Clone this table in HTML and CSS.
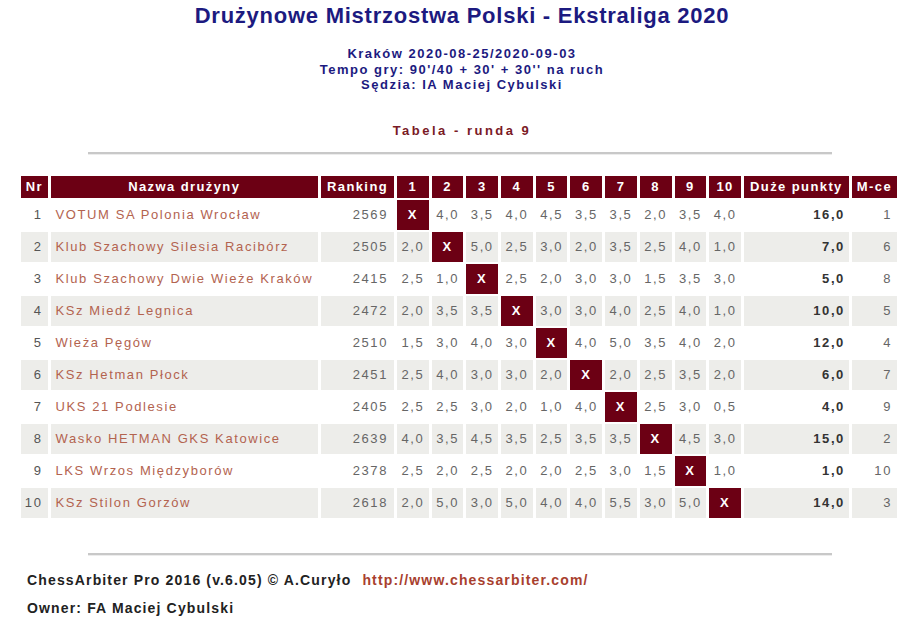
FILE: index.html
```html
<!DOCTYPE html>
<html lang="pl">
<head>
<meta charset="utf-8">
<title>Drużynowe Mistrzostwa Polski - Ekstraliga 2020</title>
<link rel="stylesheet" href="styles.css">
</head>
<body>
<h1 class="title">Drużynowe Mistrzostwa Polski - Ekstraliga 2020</h1>
<div class="info">
  <div>Kraków 2020-08-25/2020-09-03</div>
  <div>Tempo gry: 90'/40 + 30' + 30'' na ruch</div>
  <div>Sędzia: IA Maciej Cybulski</div>
</div>
<div class="round">Tabela - runda 9</div>
<hr class="rule">
<table class="standings">
  <colgroup>
    <col class="c-nr"><col class="c-name"><col class="c-rank">
    <col class="c-g"><col class="c-g"><col class="c-g"><col class="c-g"><col class="c-g">
    <col class="c-g"><col class="c-g"><col class="c-g"><col class="c-g"><col class="c-g">
    <col class="c-pts"><col class="c-pl">
  </colgroup>
  <thead>
    <tr><th>Nr</th><th>Nazwa drużyny</th><th>Ranking</th><th>1</th><th>2</th><th>3</th><th>4</th><th>5</th><th>6</th><th>7</th><th>8</th><th>9</th><th>10</th><th>Duże punkty</th><th>M-ce</th></tr>
  </thead>
  <tbody>
    <tr><td class="nr">1</td><td class="name">VOTUM SA Polonia Wrocław</td><td class="rank">2569</td><td class="x">X</td><td>4,0</td><td>3,5</td><td>4,0</td><td>4,5</td><td>3,5</td><td>3,5</td><td>2,0</td><td>3,5</td><td>4,0</td><td class="pts">16,0</td><td class="pl">1</td></tr>
    <tr class="alt"><td class="nr">2</td><td class="name">Klub Szachowy Silesia Racibórz</td><td class="rank">2505</td><td>2,0</td><td class="x">X</td><td>5,0</td><td>2,5</td><td>3,0</td><td>2,0</td><td>3,5</td><td>2,5</td><td>4,0</td><td>1,0</td><td class="pts">7,0</td><td class="pl">6</td></tr>
    <tr><td class="nr">3</td><td class="name">Klub Szachowy Dwie Wieże Kraków</td><td class="rank">2415</td><td>2,5</td><td>1,0</td><td class="x">X</td><td>2,5</td><td>2,0</td><td>3,0</td><td>3,0</td><td>1,5</td><td>3,5</td><td>3,0</td><td class="pts">5,0</td><td class="pl">8</td></tr>
    <tr class="alt"><td class="nr">4</td><td class="name">KSz Miedź Legnica</td><td class="rank">2472</td><td>2,0</td><td>3,5</td><td>3,5</td><td class="x">X</td><td>3,0</td><td>3,0</td><td>4,0</td><td>2,5</td><td>4,0</td><td>1,0</td><td class="pts">10,0</td><td class="pl">5</td></tr>
    <tr><td class="nr">5</td><td class="name">Wieża Pęgów</td><td class="rank">2510</td><td>1,5</td><td>3,0</td><td>4,0</td><td>3,0</td><td class="x">X</td><td>4,0</td><td>5,0</td><td>3,5</td><td>4,0</td><td>2,0</td><td class="pts">12,0</td><td class="pl">4</td></tr>
    <tr class="alt"><td class="nr">6</td><td class="name">KSz Hetman Płock</td><td class="rank">2451</td><td>2,5</td><td>4,0</td><td>3,0</td><td>3,0</td><td>2,0</td><td class="x">X</td><td>2,0</td><td>2,5</td><td>3,5</td><td>2,0</td><td class="pts">6,0</td><td class="pl">7</td></tr>
    <tr><td class="nr">7</td><td class="name">UKS 21 Podlesie</td><td class="rank">2405</td><td>2,5</td><td>2,5</td><td>3,0</td><td>2,0</td><td>1,0</td><td>4,0</td><td class="x">X</td><td>2,5</td><td>3,0</td><td>0,5</td><td class="pts">4,0</td><td class="pl">9</td></tr>
    <tr class="alt"><td class="nr">8</td><td class="name">Wasko HETMAN GKS Katowice</td><td class="rank">2639</td><td>4,0</td><td>3,5</td><td>4,5</td><td>3,5</td><td>2,5</td><td>3,5</td><td>3,5</td><td class="x">X</td><td>4,5</td><td>3,0</td><td class="pts">15,0</td><td class="pl">2</td></tr>
    <tr><td class="nr">9</td><td class="name">LKS Wrzos Międzyborów</td><td class="rank">2378</td><td>2,5</td><td>2,0</td><td>2,5</td><td>2,0</td><td>2,0</td><td>2,5</td><td>3,0</td><td>1,5</td><td class="x">X</td><td>1,0</td><td class="pts">1,0</td><td class="pl">10</td></tr>
    <tr class="alt"><td class="nr">10</td><td class="name">KSz Stilon Gorzów</td><td class="rank">2618</td><td>2,0</td><td>5,0</td><td>3,0</td><td>5,0</td><td>4,0</td><td>4,0</td><td>5,5</td><td>3,0</td><td>5,0</td><td class="x">X</td><td class="pts">14,0</td><td class="pl">3</td></tr>
  </tbody>
</table>
<hr class="rule rule-bottom">
<div class="footer">
  <p class="credit">ChessArbiter Pro 2016 (v.6.05) © A.Curyło <a class="site" href="#">http://www.chessarbiter.com/</a></p>
  <p class="owner">Owner: FA Maciej Cybulski</p>
</div>
</body>
</html>
```

FILE: styles.css
```css
html, body {
  margin: 0;
  padding: 0;
  background: #ffffff;
}
body {
  font-family: "Liberation Sans", Arial, sans-serif;
  width: 924px;
}
.title {
  margin: 0;
  padding-top: 4px;
  font-size: 22px;
  line-height: 24px;
  font-weight: bold;
  letter-spacing: 0.75px;
  color: #1c1a80;
  text-align: center;
}
.info {
  margin-top: 18px;
  font-size: 13px;
  line-height: 15.5px;
  font-weight: bold;
  letter-spacing: 1.5px;
  color: #1c1a80;
  text-align: center;
}
.round {
  margin-top: 30px;
  font-size: 13px;
  line-height: 16px;
  font-weight: bold;
  letter-spacing: 2.5px;
  color: #7a1a26;
  text-align: center;
}
.rule {
  width: 744px;
  margin: 13px 0 0 88px;
  height: 0;
  border: 0;
  border-top: 2px solid #c8c8c8;
  border-bottom: 1px solid #ececec;
}
.standings {
  margin: 19px 0 0 18px;
  border-collapse: separate;
  border-spacing: 3px 2.1px;
  table-layout: fixed;
  width: 882px;
  font-size: 13px;
  letter-spacing: 1.6px;
  color: #666666;
}
.c-nr { width: 26.5px; }
.c-name { width: 267.5px; }
.c-rank { width: 73px; }
.c-g { width: 31.7px; }
.c-pts { width: 105px; }
.c-pl { width: 45px; }
.standings th {
  background: #6c0014;
  color: #ffffff;
  font-weight: bold;
  height: 22px;
  padding: 0;
  text-align: center;
  white-space: nowrap;
  overflow: hidden;
  letter-spacing: 1.4px;
}
.standings td {
  height: 30px;
  padding: 0;
  text-align: center;
  white-space: nowrap;
}
.standings tr.alt td {
  background: #ededea;
}
.standings td.nr {
  text-align: right;
  padding-right: 5px;
  color: #555555;
}
.standings td.name {
  text-align: left;
  padding-left: 5px;
  color: #b3634f;
}
.standings td.rank {
  text-align: right;
  padding-right: 6px;
}
.standings td.pts {
  text-align: right;
  padding-right: 4px;
  font-weight: bold;
  color: #333333;
}
.standings td.pl {
  text-align: right;
  padding-right: 5px;
}
.standings td.x,
.standings tr.alt td.x {
  background: #6c0014;
  color: #ffffff;
  font-weight: bold;
}
.rule-bottom {
  margin-top: 33px;
}
.footer {
  padding-left: 27px;
  font-size: 14px;
  font-weight: bold;
  letter-spacing: 1.15px;
  color: #222222;
}
.footer p {
  margin: 0;
  line-height: 16px;
}
.credit {
  margin-top: 16px !important;
}
.owner {
  margin-top: 12px !important;
}
.site {
  margin-left: 6px;
  color: #a8402e;
  text-decoration: none;
}
```
